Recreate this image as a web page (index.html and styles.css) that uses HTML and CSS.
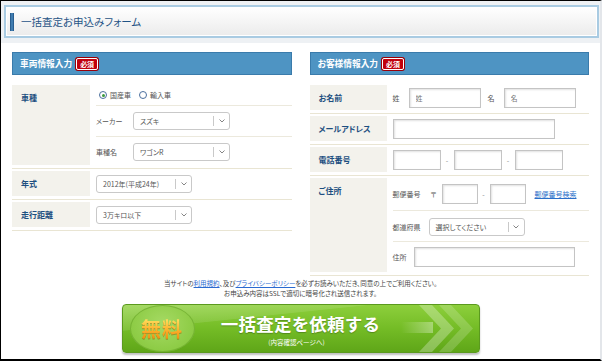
FILE: index.html
```html
<!DOCTYPE html>
<html lang="ja">
<head>
  <meta charset="UTF-8">
  <meta name="viewport" content="width=device-width, initial-scale=1">
  <title>一括査定お申込みフォーム</title>
  <link rel="stylesheet" href="styles.css">
</head>
<body>
  <div class="page">
    <div class="title-wrap">
      <div class="title">
        <span class="title-bar"></span>
        <h1>一括査定お申込みフォーム</h1>
      </div>
    </div>

    <main class="content">
      <div class="columns">
        <!-- 車両情報 -->
        <section class="block">
          <h2 class="block-head">車両情報入力<span class="req">必須</span></h2>
          <div class="rows">
            <div class="row">
              <div class="label">車種</div>
              <div class="field stack">
                <div class="sub sub-radio">
                  <label class="radio"><span class="dot on"></span>国産車</label>
                  <label class="radio"><span class="dot"></span>輸入車</label>
                </div>
                <div class="sub">
                  <span class="sub-label w37">メーカー</span>
                  <div class="select w97">スズキ<span class="select-arrow"><svg width="6" height="4" viewBox="0 0 6 4"><polyline points="0.5,0.5 3,3 5.5,0.5" fill="none" stroke="#777" stroke-width="0.9"/></svg></span></div>
                </div>
                <div class="sub">
                  <span class="sub-label w37">車種名</span>
                  <div class="select w97">ワゴンR<span class="select-arrow"><svg width="6" height="4" viewBox="0 0 6 4"><polyline points="0.5,0.5 3,3 5.5,0.5" fill="none" stroke="#777" stroke-width="0.9"/></svg></span></div>
                </div>
              </div>
            </div>
            <div class="row">
              <div class="label">年式</div>
              <div class="field">
                <div class="select w96">2012年(平成24年)<span class="select-arrow"><svg width="6" height="4" viewBox="0 0 6 4"><polyline points="0.5,0.5 3,3 5.5,0.5" fill="none" stroke="#777" stroke-width="0.9"/></svg></span></div>
              </div>
            </div>
            <div class="row">
              <div class="label">走行距離</div>
              <div class="field">
                <div class="select w96">3万キロ以下<span class="select-arrow"><svg width="6" height="4" viewBox="0 0 6 4"><polyline points="0.5,0.5 3,3 5.5,0.5" fill="none" stroke="#777" stroke-width="0.9"/></svg></span></div>
              </div>
            </div>
          </div>
        </section>

        <!-- お客様情報 -->
        <section class="block">
          <h2 class="block-head">お客様情報入力<span class="req">必須</span></h2>
          <div class="rows">
            <div class="row">
              <div class="label narrow">お名前</div>
              <div class="field">
                <span class="sub-label w16">姓</span>
                <input class="input w72" type="text" placeholder="姓">
                <span class="sub-label w16 ml7">名</span>
                <input class="input w72" type="text" placeholder="名">
              </div>
            </div>
            <div class="row">
              <div class="label narrow">メールアドレス</div>
              <div class="field">
                <input class="input w162" type="text">
              </div>
            </div>
            <div class="row">
              <div class="label narrow">電話番号</div>
              <div class="field">
                <input class="input w48" type="text">
                <span class="dash w13">-</span>
                <input class="input w48" type="text">
                <span class="dash w13">-</span>
                <input class="input w48" type="text">
              </div>
            </div>
            <div class="row">
              <div class="label narrow">ご住所</div>
              <div class="field stack">
                <div class="sub">
                  <span class="sub-label w38">郵便番号</span>
                  <span class="sub-label w11">〒</span>
                  <input class="input w36" type="text">
                  <span class="dash w12">-</span>
                  <input class="input w36" type="text">
                  <a class="zip-link" href="#">郵便番号検索</a>
                </div>
                <div class="sub sub-pref">
                  <span class="sub-label w36">都道府県</span>
                  <div class="select w96">選択してください<span class="select-arrow"><svg width="6" height="4" viewBox="0 0 6 4"><polyline points="0.5,0.5 3,3 5.5,0.5" fill="none" stroke="#777" stroke-width="0.9"/></svg></span></div>
                </div>
                <div class="sub sub-addr">
                  <span class="sub-label w21">住所</span>
                  <input class="input w161" type="text">
                </div>
              </div>
            </div>
          </div>
        </section>
      </div>

      <p class="notes">
        当サイトの<a href="#">利用規約</a>、及び<a href="#">プライバシーポリシー</a>を必ずお読みいただき、同意の上でご利用ください。<br>
        お申込み内容はSSLで適切に暗号化され送信されます。
      </p>

      <a class="submit" href="#">
        <span class="free"><span class="free-text">無料</span></span>
        <svg class="arrows" width="75" height="47" viewBox="0 0 75 47">
          <defs>
            <linearGradient id="shaft" x1="0" x2="1" y1="0" y2="0">
              <stop offset="0" stop-color="#fff" stop-opacity="0"/>
              <stop offset="1" stop-color="#fff" stop-opacity="0.35"/>
            </linearGradient>
          </defs>
          <rect x="0" y="17" width="32" height="11" fill="url(#shaft)"/>
          <polygon points="18,0 31,0 53,23.5 31,47 18,47 40,23.5" fill="#fff" fill-opacity="0.28"/>
          <polygon points="38,0 50,0 72,23.5 50,47 38,47 60,23.5" fill="#fff" fill-opacity="0.18"/>
        </svg>
        <span class="submit-main">一括査定を依頼する</span>
        <span class="submit-sub">(内容確認ページへ)</span>
      </a>
    </main>
  </div>
</body>
</html>
```

FILE: styles.css
```css
body {
  margin: 0;
  font-family: "Noto Sans CJK JP", "Noto Sans", sans-serif;
}

.page {
  width: 602px;
  height: 361px;
  box-sizing: border-box;
  border: 1px solid #000;
  border-bottom-width: 2px;
  border-right: 2px solid #e3e6ea;
  background: #fff;
  overflow: hidden;
  color: #555;
  font-feature-settings: "palt";
}

/* タイトル */
.title-wrap {
  background: #eef1f4;
  padding: 4px 1px 5px 3px;
}

.title {
  height: 33px;
  box-sizing: border-box;
  border: 2px solid #a9cbe2;
  box-shadow: inset 0 0 0 1px #fff;
  background: linear-gradient(#ffffff, #ebebeb);
  display: flex;
  align-items: center;
  padding-left: 4px;
}

.title-bar {
  width: 4px;
  height: 18px;
  background: linear-gradient(90deg, #1d4f80, #4d8cc0 50%, #1d4f80);
}

.title h1 {
  margin: 0 0 0 7px;
  font-size: 10.5px;
  font-weight: normal;
  color: #1f5385;
}

/* 本体 */
.content {
  padding: 9px 11px 0 11px;
}

.columns {
  display: flex;
  gap: 18px;
}

.block {
  width: 280px;
}

.block-head {
  margin: 0;
  height: 23px;
  box-sizing: border-box;
  background: #4e94c3;
  border: 1px solid #3a7bab;
  color: #fff;
  font-size: 8.7px;
  font-weight: bold;
  display: flex;
  align-items: center;
  padding-left: 7px;
}

.req {
  margin-left: 4px;
  background: #c0000c;
  border: 1px solid #fff;
  box-shadow: 0 0 0 1px #9a0008;
  border-radius: 2px;
  font-size: 7px;
  line-height: 10px;
  padding: 0 3px;
}

.rows {
  margin-top: 10px;
}

.row {
  display: flex;
  padding-bottom: 3px;
  border-bottom: 1px solid #e9e5d3;
  margin-bottom: 2px;
}

.label {
  width: 78px;
  flex-shrink: 0;
  min-height: 25px;
  box-sizing: border-box;
  background: #f3f2ec;
  padding: 6px 0 0 9px;
  font-size: 8px;
  line-height: 13px;
  font-weight: bold;
  color: #1d4f80;
}

.label.narrow {
  width: 77px;
}

.field {
  flex: 1;
  padding-left: 6px;
  display: flex;
  align-items: center;
  font-size: 7px;
}

.field.stack {
  flex-direction: column;
  align-items: stretch;
}

.sub {
  display: flex;
  align-items: center;
  padding: 6px 0;
  border-bottom: 1px solid #ece9dd;
}

.sub:last-child {
  border-bottom: none;
  padding-bottom: 4px;
}

.sub-radio {
  height: 20px;
  padding: 0;
}

.sub-pref {
  padding: 7px 0 5px;
}

.sub-addr {
  padding: 5px 0 5px;
}

.sub-addr:last-child {
  padding-bottom: 5px;
}

.radio {
  display: flex;
  align-items: center;
  margin-left: 3px;
  margin-right: 5px;
}

.dot {
  width: 8px;
  height: 8px;
  box-sizing: border-box;
  border: 1px solid #4b6f9e;
  border-radius: 50%;
  background: #fff;
  margin-right: 3px;
  position: relative;
}

.dot.on::after {
  content: "";
  position: absolute;
  left: 1.5px;
  top: 1.5px;
  width: 3px;
  height: 3px;
  border-radius: 50%;
  background: #3d9a3d;
}

.sub-label {
  flex-shrink: 0;
}

.w11 { width: 11px; }
.w16 { width: 16px; }
.w21 { width: 21px; }
.w36 { width: 36px; }
.w37 { width: 37px; }
.w38 { width: 38px; }
.ml7 { margin-left: 7px; }

/* セレクト */
.select {
  height: 18px;
  box-sizing: border-box;
  border: 1px solid #c9c9c9;
  border-radius: 3px;
  background: #fff;
  display: flex;
  align-items: center;
  padding-left: 6px;
  color: #555;
  font-size: 7px;
  white-space: nowrap;
}

.select.w97 { width: 97px; }
.select.w96 { width: 96px; }

.select-arrow {
  margin-left: auto;
  width: 16px;
  height: 10px;
  box-sizing: border-box;
  border-left: 1px solid #c9c9c9;
  display: flex;
  align-items: center;
  justify-content: center;
}

/* 入力欄 */
.input {
  height: 20px;
  box-sizing: border-box;
  border: 1px solid #c4c4c4;
  box-shadow: inset 1px 1px 2px rgba(0, 0, 0, 0.12);
  background: #fff;
  padding: 0 0 0 6px;
  margin: 0;
  font-family: inherit;
  font-size: 7px;
  color: #555;
  outline: none;
}

.input::placeholder {
  color: #777;
}

.input.w36 { width: 36px; }
.input.w48 { width: 48px; }
.input.w72 { width: 72px; }
.input.w161 { width: 161px; }
.input.w162 { width: 162px; }

.dash {
  text-align: center;
  color: #888;
  flex-shrink: 0;
}

.w12 { width: 12px; }
.w13 { width: 13px; }

.zip-link {
  margin-left: 9px;
  color: #2a6fc9;
  text-decoration: underline;
}

/* 注意書き */
.notes {
  margin: 1px 0 6px;
  text-align: center;
  font-size: 6.5px;
  line-height: 9.5px;
  color: #444;
}

.notes a {
  color: #2a6ad0;
  text-decoration: underline;
}

/* 送信ボタン */
.submit {
  position: relative;
  display: flex;
  flex-direction: column;
  align-items: center;
  width: 358px;
  height: 49px;
  box-sizing: border-box;
  margin: 0 auto;
  padding-top: 10px;
  border: 1px solid #5b9a1e;
  border-radius: 4px;
  background:
    linear-gradient(174deg, rgba(255, 255, 255, 0.22) 0%, rgba(255, 255, 255, 0.1) 30%, rgba(255, 255, 255, 0) 31%),
    linear-gradient(#8dcf3c, #74bc26 50%, #5fa618);
  box-shadow: 0 2px 2px rgba(0, 0, 0, 0.25);
  text-decoration: none;
  overflow: hidden;
  font-feature-settings: normal;
}

.free {
  position: absolute;
  left: 7px;
  top: 0;
  width: 65px;
  height: 47px;
  border-radius: 50%;
  background: radial-gradient(ellipse at 50% 40%, #a6da64, #8ccb44 70%, #7fc03a);
  box-shadow: inset 0 0 0 1px rgba(90, 150, 30, 0.45);
  display: flex;
  align-items: center;
  justify-content: center;
}

.free-text {
  font-size: 20px;
  line-height: 22px;
  font-weight: bold;
  letter-spacing: 1px;
  background: linear-gradient(#ffe363, #fbb02b 55%, #f28a0c);
  -webkit-background-clip: text;
  background-clip: text;
  color: transparent;
  filter: drop-shadow(0 1px 0 rgba(140, 70, 0, 0.45));
}

.arrows {
  position: absolute;
  left: 278px;
  top: 0;
}

.submit-main {
  position: relative;
  font-size: 17.5px;
  line-height: 18px;
  font-weight: bold;
  letter-spacing: 0.2px;
  color: #fff;
  text-shadow: 0 1px 1px rgba(0, 0, 0, 0.25);
}

.submit-sub {
  position: relative;
  margin-top: 5px;
  margin-right: 8px;
  font-size: 6.5px;
  line-height: 8px;
  color: #fff;
}
```
